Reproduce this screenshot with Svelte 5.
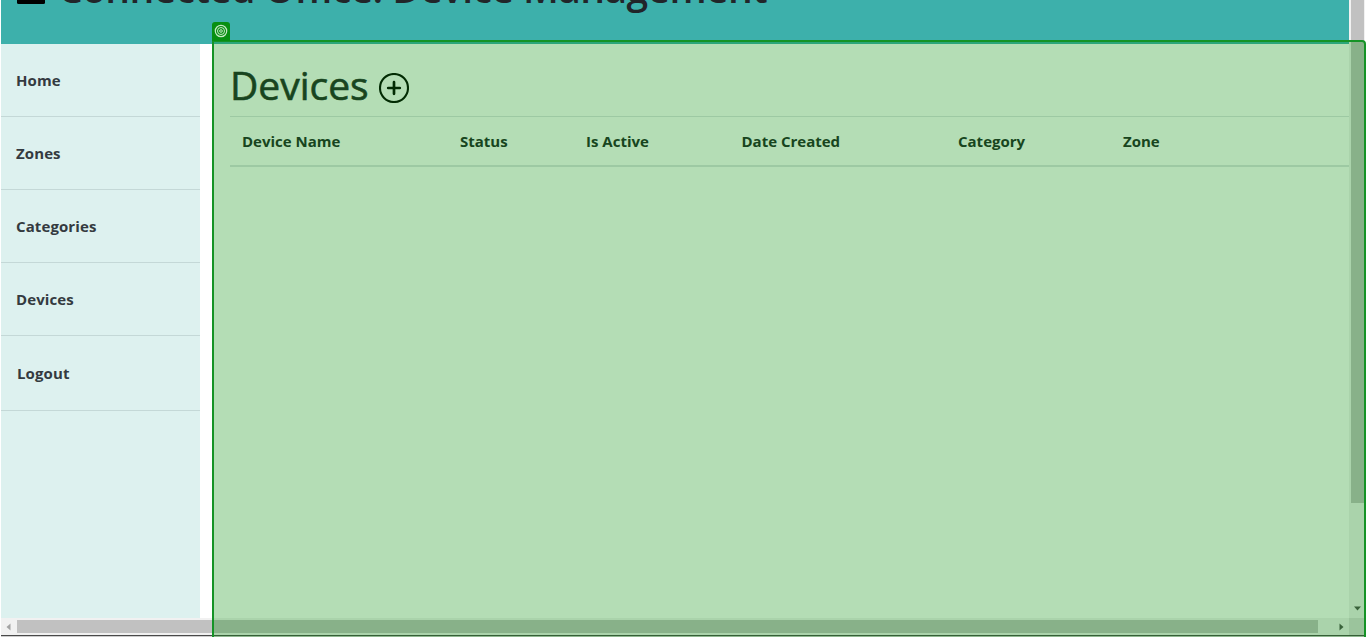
<script>
  const links = ['Home', 'Zones', 'Categories', 'Devices', 'Logout'];
  const columns = [
    { label: 'Device Name', width: 218 },
    { label: 'Status', width: 126 },
    { label: 'Is Active', width: 155.5 },
    { label: 'Date Created', width: 216.5 },
    { label: 'Category', width: 165 },
    { label: 'Zone', width: 238 }
  ];
</script>

<div class="window">
  <div class="viewport">
    <header>
      <svg class="person" width="28" height="28" viewBox="0 0 28 28"><circle cx="14" cy="7" r="7" /><path d="M1.5 28Q0 28 0 26.5V24C0 14 28 14 28 24V26.5Q28 28 26.5 28Z" /></svg>
      <h1>Connected Office: Device Management</h1>
    </header>
    <div class="body">
      <nav>
        {#each links as link}
          <a class:last={link === 'Logout'} href="#{link.toLowerCase()}">{link}</a>
        {/each}
      </nav>
      <main>
        <div class="heading">
          <h2>Devices</h2>
          <svg width="30" height="30" viewBox="0 0 30 30" fill="none" stroke="#000"><circle cx="15" cy="15" r="14" stroke-width="2.1" /><path d="M15 9.2V20.8M9.2 15H20.8" stroke-width="2.7" stroke-linecap="round" /></svg>
        </div>
        <div class="table-head">
          {#each columns as column}
            <div style:width="{column.width}px"><span>{column.label}</span></div>
          {/each}
        </div>
      </main>
    </div>
  </div>
  <div class="vbar">
    <div class="vthumb"></div>
    <svg width="9" height="5" viewBox="0 0 9 5"><path d="M1 0.5H8L4.5 4.5Z" fill="#505050" /></svg>
  </div>
  <div class="hbar">
    <svg width="5" height="8" viewBox="0 0 5 8"><path d="M4.5 0.5V7.5L0.5 4Z" fill="#a3a3a3" /></svg>
    <div class="hthumb"></div>
    <svg class="right" width="5" height="8" viewBox="0 0 5 8"><path d="M0.5 0.5V7.5L4.5 4Z" fill="#505050" /></svg>
  </div>
  <div class="corner"></div>
  <div class="bottom"></div>
  <div class="overlay"></div>
  <div class="badge">
    <svg width="14" height="14" viewBox="0 0 14 14" fill="none" stroke="#c6e8c6"><circle cx="7" cy="7" r="5.7" stroke-width="1.2" /><circle cx="7" cy="7" r="3.5" /><circle cx="7" cy="7" r="1.3" /></svg>
  </div>
</div>

<style>
  .window {
    position: relative;
    display: grid;
    grid-template-columns: 1348px 16px;
    grid-template-rows: 618px 17px 2px;
    width: 1366px;
    height: 637px;
    box-sizing: border-box;
    padding-left: 1px;
    overflow: hidden;
    background: #fff;
    color: #212529;
    font-family: 'Open Sans', 'Noto Sans', sans-serif;
  }
  .viewport { overflow: hidden; display: flex; flex-direction: column; }
  header {
    height: 44px;
    flex: none;
    display: flex;
    align-items: flex-start;
    background: #3db0ab;
  }
  .person { flex: none; margin: -24px 16px 0 16px; }
  h1 {
    margin: -41px 0 0 -3px;
    font-size: 39px;
    line-height: 58px;
    font-weight: 600;
    letter-spacing: -0.58px;
    white-space: nowrap;
  }
  .body { display: flex; flex: 1; }
  nav { width: 199px; background: #ddf1ef; }
  nav a {
    display: block;
    box-sizing: border-box;
    height: 73px;
    padding: 24px 0 0 15px;
    border-bottom: 1px solid #c4d8d7;
    color: #343a40;
    font-size: 15px;
    line-height: 24px;
    font-weight: 700;
    letter-spacing: 0.1px;
    text-decoration: none;
  }
  nav a.last { height: 75px; padding: 25px 0 0 16px; }
  main { flex: 1; padding: 18px 0 0 30px; }
  .heading { display: flex; height: 54px; gap: 10px; }
  .heading svg { margin-top: 11px; flex: none; }
  h2 {
    width: 139px;
    margin: -5px 0 0;
    font-size: 39px;
    line-height: 56px;
    font-weight: 500;
    -webkit-text-stroke: 0.6px currentColor;
    white-space: nowrap;
  }
  .table-head {
    display: flex;
    height: 48px;
    border-top: 1px solid #dee2e6;
    border-bottom: 2px solid #dee2e6;
    font-size: 15px;
    line-height: 24px;
    font-weight: 700;
    white-space: nowrap;
  }
  .table-head div { padding: 12px 0 0 12px; box-sizing: border-box; flex: none; }
  .vbar { display: flex; flex-direction: column; align-items: flex-start; background: #f1f1f1; }
  .vthumb { width: 13px; height: 503px; margin-left: 2px; background: #c1c1c1; }
  .vbar svg { margin: 103px 0 0 4px; }
  .hbar { display: flex; align-items: center; background: #f1f1f1; }
  .hbar svg { margin: 0 6px 0 5px; }
  .hthumb { width: 1301px; height: 13px; background: #c1c1c1; }
  .hbar svg.right { margin: 0 0 0 21px; }
  .corner { background: #dcdcdc; }
  .bottom { grid-column: 1 / -1; background: #ccc; border-top: 1px solid #494949; }
  .overlay {
    position: absolute;
    left: 212px;
    top: 40px;
    width: 1154px;
    height: 600px;
    box-sizing: border-box;
    border: 2px solid #159326;
    border-top-right-radius: 4px;
    background: rgba(5, 142, 10, 0.3);
  }
  .badge {
    position: absolute;
    left: 212px;
    top: 22px;
    width: 18px;
    height: 19px;
    display: flex;
    justify-content: center;
    padding-top: 2px;
    box-sizing: border-box;
    border-radius: 3px 3px 0 0;
    background: #078f12;
  }
</style>
